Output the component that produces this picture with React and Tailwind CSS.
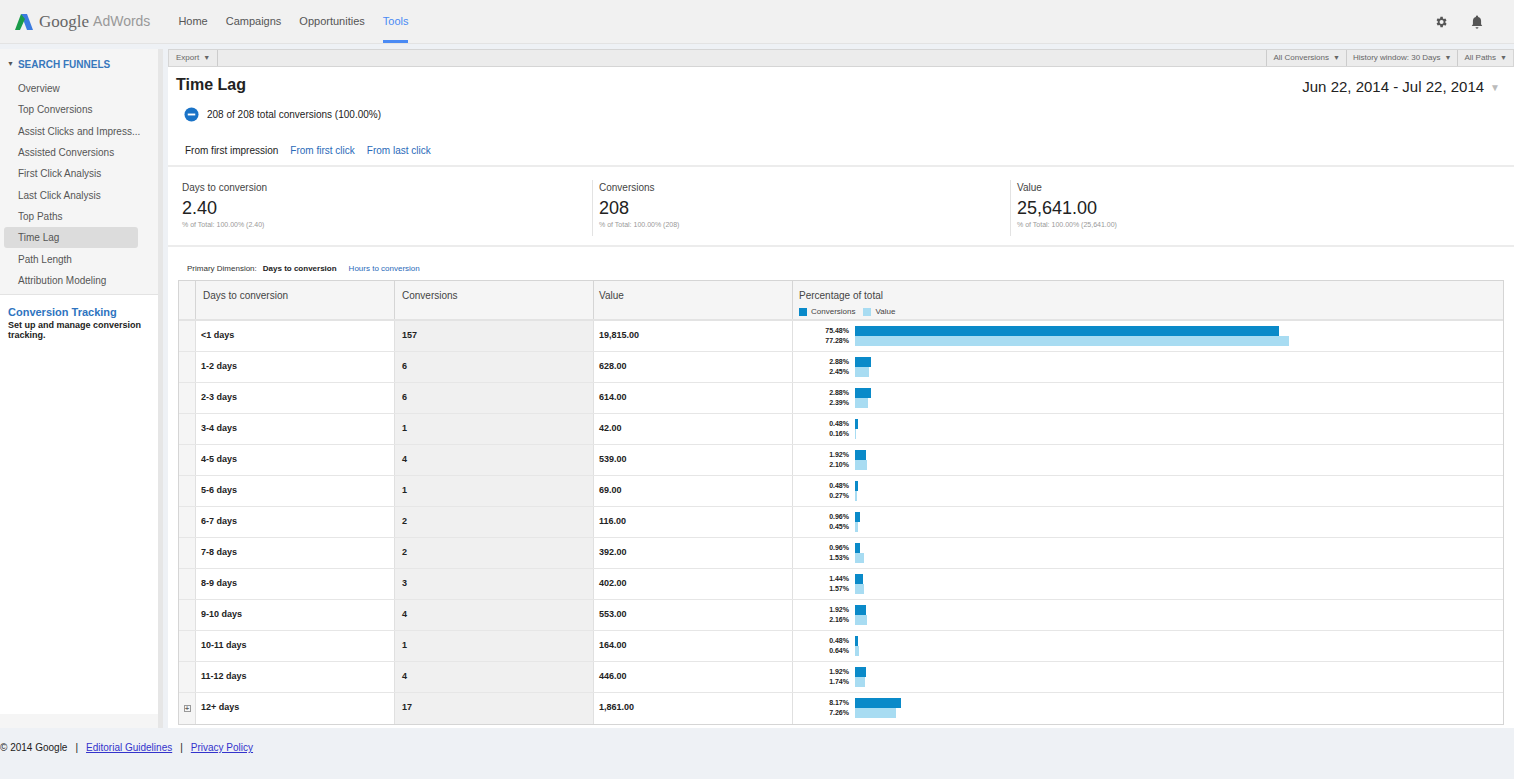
const F = { fontFamily: '"Liberation Sans", Arial, sans-serif' };
const rows = [
  ["<1 days","157","19,815.00",75.48,77.28],
  ["1-2 days","6","628.00",2.88,2.45],
  ["2-3 days","6","614.00",2.88,2.39],
  ["3-4 days","1","42.00",0.48,0.16],
  ["4-5 days","4","539.00",1.92,2.10],
  ["5-6 days","1","69.00",0.48,0.27],
  ["6-7 days","2","116.00",0.96,0.45],
  ["7-8 days","2","392.00",0.96,1.53],
  ["8-9 days","3","402.00",1.44,1.57],
  ["9-10 days","4","553.00",1.92,2.16],
  ["10-11 days","1","164.00",0.48,0.64],
  ["11-12 days","4","446.00",1.92,1.74],
  ["12+ days","17","1,861.00",8.17,7.26],
];
const side = ["Overview","Top Conversions","Assist Clicks and Impress...","Assisted Conversions","First Click Analysis","Last Click Analysis","Top Paths","Time Lag","Path Length","Attribution Modeling"];
const Caret = () => <span className="text-[7px] ml-1">▼</span>;

export default function App() {
  return (
    <div style={F} className="w-[1514px] h-[779px] bg-[#eef1f5] text-[#222] overflow-hidden">
      <div className="h-[44px] bg-[#f1f1f1] border-b border-[#e3e3e3] flex items-center px-[14px]">
        <svg width="20" height="20" viewBox="0 0 20 20"><path d="M7 2 L13 2 L19 18 L13 18 Z" fill="#3b7be0"/><path d="M7 2 L11 7 L6 18 L1 18 Z" fill="#1a9c4a"/></svg>
        <span className="ml-[5px] text-[17px] text-[#666]" style={{fontFamily:'"Liberation Serif", serif'}}>Google</span>
        <span className="ml-[4px] text-[14px] text-[#999]">AdWords</span>
        <nav className="flex ml-[28px] gap-[18px] text-[11px] text-[#555] h-full">
          {["Home","Campaigns","Opportunities","Tools"].map(n=>(
            <span key={n} className={"h-full flex items-center relative "+(n==="Tools"?"text-[#4a8af4]":"")}>{n}
              {n==="Tools"&&<span className="absolute bottom-0 left-0 right-0 h-[3px] bg-[#4a8af4]"/>}
            </span>))}
        </nav>
        <div className="ml-auto flex gap-[22px] mr-[16px] items-center">
          <svg width="14" height="14" viewBox="0 0 24 24" fill="#555"><path d="M19.4 13a7.5 7.5 0 0 0 0-2l2.1-1.6-2-3.5-2.5 1a7 7 0 0 0-1.700-1L15 3h-4l-.4 2.7a7 7 0 0 0-1.7 1l-2.5-1-2 3.5L6.6 11a7.5 7.5 0 0 0 0 2l-2.2 1.6 2 3.5 2.5-1a7 7 0 0 0 1.7 1L11 21h4l.4-2.7a7 7 0 0 0 1.7-1l2.5 1 2-3.5zM13 15.5a3.5 3.5 0 1 1 0-7 3.5 3.5 0 0 1 0 7z"/></svg>
          <svg width="14" height="16" viewBox="0 0 24 26" fill="#555"><path d="M12 2a2 2 0 0 0-2 2v.5A7 7 0 0 0 5 11v6l-2 3h18l-2-3v-6a7 7 0 0 0-5-6.5V4a2 2 0 0 0-2-2zM9.5 22a2.5 2.5 0 0 0 5 0z"/></svg>
        </div>
      </div>
      <div className="flex mt-[5px]">
        <div className="w-[163px] h-[679px] bg-[#f5f5f5] border-r-[5px] border-[#e6e6e6] shrink-0">
          <div className="pt-[8px] px-[7px] text-[10px] font-bold text-[#3777bc] flex items-center gap-[4px]"><span className="text-[7px] text-[#555]">▼</span>SEARCH FUNNELS</div>
          <div className="mt-[6px] px-[4px]">
            {side.map(s=>(
              <div key={s} className={"h-[21.3px] flex items-center px-[14px] text-[10px] text-[#555] rounded-[3px] whitespace-nowrap overflow-hidden "+(s==="Time Lag"?"bg-[#dcdcdc] mr-[16px]":"")}>{s}</div>))}
          </div>
          <div className="mt-[3px] border-t border-[#e3e3e3] bg-white h-[420px] px-[8px] pt-[9px]">
            <div className="text-[11px] font-bold text-[#2e74c0]">Conversion Tracking</div>
            <div className="text-[9px] font-bold text-[#222] leading-[10px]">Set up and manage conversion tracking.</div>
          </div>
        </div>
        <div className="flex-1 bg-white h-[679px] ml-[5px]">
          <div className="h-[18px] bg-[#ececec] border border-[#d5d5d5] flex text-[8px] text-[#666]">
            <div className="px-[7px] flex items-center border-r border-[#ccc]">Export<Caret/></div>
            <div className="ml-auto flex">
              {["All Conversions","History window: 30 Days","All Paths"].map(t=>(<div key={t} className="px-[6px] flex items-center border-l border-[#ccc]">{t}<Caret/></div>))}
            </div>
          </div>
          <div className="flex justify-between px-[8px] pt-[6px]">
            <div className="text-[16px] font-bold">Time Lag</div>
            <div className="text-[15px] text-[#222] mr-[6px] mt-[3px] flex items-center">Jun 22, 2014 - Jul 22, 2014<span className="text-[#bbb] text-[10px] ml-[6px]">▼</span></div>
          </div>
          <div className="flex items-center gap-[8px] px-[16px] mt-[8px] text-[10px]">
            <svg width="15" height="15" viewBox="0 0 16 16"><circle cx="8" cy="8" r="7.5" fill="#1a73c7"/><rect x="4" y="7" width="8" height="2" fill="#fff"/></svg>
            208 of 208 total conversions (100.00%)
          </div>
          <div className="flex gap-[12px] px-[17px] mt-[21px] text-[10px] h-[22px]">
            <span>From first impression</span><span className="text-[#2a6ab9]">From first click</span><span className="text-[#2a6ab9]">From last click</span>
          </div>
          <div className="border-y-2 border-[#ececec] h-[82px] flex px-[6px]">
            {[["Days to conversion","2.40","% of Total: 100.00% (2.40)"],["Conversions","208","% of Total: 100.00% (208)"],["Value","25,641.00","% of Total: 100.00% (25,641.00)"]].map(([a,b,c],i)=>(
              <div key={a} className={"pt-[13px] px-[8px] "+(i<2?"w-[418px]":"flex-1")}>
                <div className={"h-[56px] "+(i>0?"border-l border-[#e3e3e3] pl-[6px] -ml-[8px]":"")}>
                  <div className="text-[10px] text-[#444]">{a}</div>
                  <div className="text-[18px] leading-[24px] mt-[1px]">{b}</div>
                  <div className="text-[7px] text-[#999]">{c}</div>
                </div>
              </div>))}
          </div>
          <div className="px-[19px] pt-[16px] text-[8px] flex gap-[6px]">
            <span className="text-[#333]">Primary Dimension:</span><span className="font-bold text-[#222]">Days to conversion</span><span className="ml-[6px] text-[#2a6ab9]">Hours to conversion</span>
          </div>
          <div className="mx-[10px] mt-[5px] border border-[#d5d5d5]">
            <div className="flex h-[40px] bg-[#f5f5f5] border-b-2 border-[#e3e3e3] text-[10px] text-[#444]">
              <div className="w-[17px] border-r border-[#d5d5d5]"/>
              <div className="w-[199px] border-r border-[#d5d5d5] px-[7px] pt-[7px]">Days to conversion</div>
              <div className="w-[199px] border-r border-[#d5d5d5] px-[7px] pt-[7px]">Conversions</div>
              <div className="w-[199px] border-r border-[#d5d5d5] px-[5px] pt-[7px]">Value</div>
              <div className="flex-1 px-[6px] pt-[7px]">Percentage of total
                <div className="flex items-center gap-[4px] mt-[3px] text-[8px]"><span className="w-[8px] h-[8px] bg-[#0a8ac9]"/>Conversions<span className="w-[8px] h-[8px] bg-[#a8dcf2] ml-[4px]"/>Value</div>
              </div>
            </div>
            {rows.map((r,i)=>(
              <div key={r[0]} className={"flex h-[31px] text-[9px] font-bold "+(i<12?"border-b border-[#e6e6e6]":"")}>
                <div className="w-[17px] border-r border-[#e0e0e0] bg-[#f5f5f5] flex items-center justify-center">{i===12&&<span className="w-[7px] h-[7px] border border-[#999] text-[7px] leading-[5px] text-center text-[#666]">+</span>}</div>
                <div className="w-[199px] border-r border-[#e0e0e0] px-[5px] flex items-center">{r[0]}</div>
                <div className="w-[199px] border-r border-[#e0e0e0] bg-[#f0f0f0] px-[7px] flex items-center">{r[1]}</div>
                <div className="w-[199px] border-r border-[#e0e0e0] px-[5px] flex items-center">{r[2]}</div>
                <div className="flex-1 flex items-center">
                  <div className="w-[62px] text-right text-[7px] leading-[10px] pr-[6px]"><div>{r[3].toFixed(2)}%</div><div>{r[4].toFixed(2)}%</div></div>
                  <div className="flex flex-col">
                    <div className="h-[10px] bg-[#0a8ac9]" style={{width: Math.max(2, r[3]*5.62)}}/>
                    <div className="h-[10px] bg-[#a8dcf2]" style={{width: Math.max(1, r[4]*5.62)}}/>
                  </div>
                </div>
              </div>))}
          </div>
        </div>
      </div>
      <div className="px-0 pt-[12px] text-[10px] text-[#222] flex gap-[8px]">
        <span>© 2014 Google</span><span>|</span><span className="text-[#3333cc] underline">Editorial Guidelines</span><span>|</span><span className="text-[#3333cc] underline">Privacy Policy</span>
      </div>
    </div>
  );
}
